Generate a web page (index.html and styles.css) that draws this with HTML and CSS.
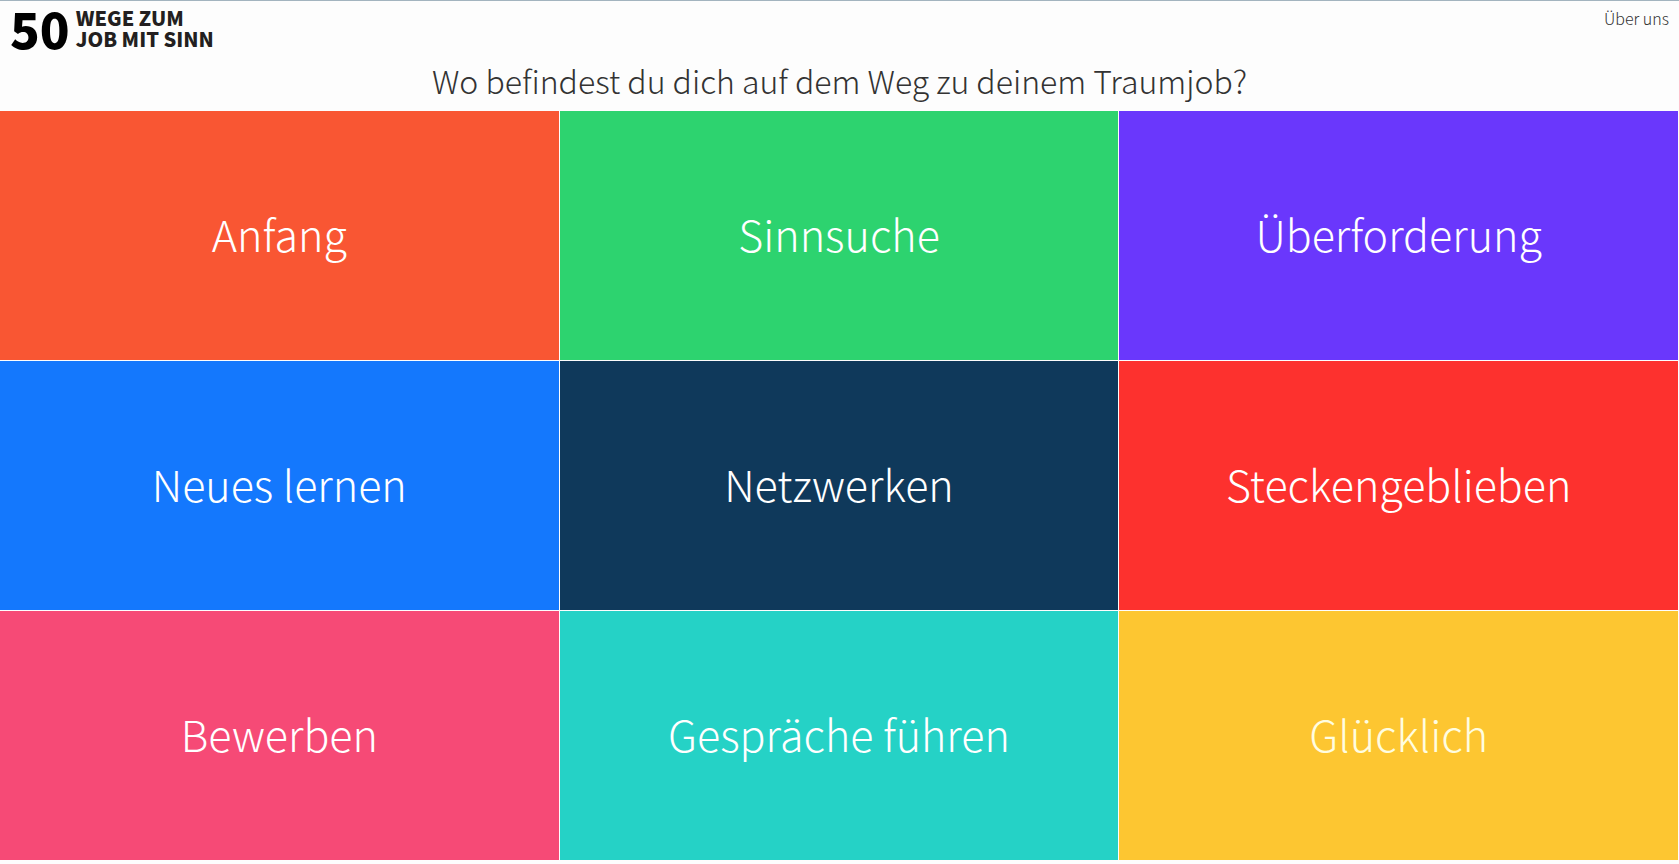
FILE: index.html
```html
<!DOCTYPE html>
<html lang="de">
<head>
    <meta charset="UTF-8">
    <meta name="viewport" content="width=device-width, initial-scale=1.0">
    <title>50 Wege zum Job mit Sinn</title>
    <link rel="stylesheet" href="styles.css">
</head>
<body>

    <header class="header">
        <a class="logo" href="#">
            <span class="logo-number">50</span>
            <span class="logo-text">WEGE ZUM<br>JOB MIT SINN</span>
        </a>
        <nav>
            <a class="nav-link" href="#">Über uns</a>
        </nav>
    </header>

    <h1 class="question">Wo befindest du dich auf dem Weg zu deinem Traumjob?</h1>

    <main class="tiles">
        <a class="tile start" href="#">Anfang</a>
        <a class="tile purpose" href="#">Sinnsuche</a>
        <a class="tile overload" href="#">Überforderung</a>
        <a class="tile learn" href="#">Neues lernen</a>
        <a class="tile network" href="#">Netzwerken</a>
        <a class="tile stuck" href="#">Steckengeblieben</a>
        <a class="tile apply" href="#">Bewerben</a>
        <a class="tile talk" href="#">Gespräche führen</a>
        <a class="tile happy" href="#">Glücklich</a>
    </main>

</body>
</html>
```

FILE: styles.css
```css
/* General Styles */
* {
    box-sizing: border-box;
}

body {
    display: flex;
    flex-direction: column;
    min-height: 100vh;
    margin: 0;
    padding-bottom: 3px;
    border-top: 1px solid #a3b4bf;
    background-color: #fdfdfd;
    color: #333;
    font-family: "Source Sans Pro", "Noto Sans CJK SC", sans-serif;
    font-weight: 300;
}

a {
    color: inherit;
    text-decoration: none;
}

/* Header Section */
.header {
    display: flex;
    justify-content: space-between;
    padding: 6px 10px 0;
}

.logo {
    display: flex;
    gap: 6px;
    color: #231f20;
    font-weight: 900;
}

.logo-number {
    color: #000;
    font-size: 49px;
    line-height: 42px;
}

.logo-text {
    font-size: 20px;
    line-height: 21px;
}

.nav-link {
    display: block;
    font-size: 16px;
    line-height: 22px;
}

/* Question */
.question {
    margin: 0;
    padding: 9px 10px;
    font-size: 32px;
    font-weight: 300;
    line-height: 44px;
    text-align: center;
}

/* Tiles */
.tiles {
    flex: 1;
    display: grid;
    grid-template-columns: repeat(3, 1fr);
    grid-auto-rows: 1fr;
}

.tile {
    display: flex;
    align-items: center;
    justify-content: center;
    padding-bottom: 6px;
    border: 0 solid #fdfdfd;
    border-width: 0 1px 1px 0;
    background-clip: padding-box;
    color: #fff;
    font-size: 43px;
    line-height: 64px;
}

.tile:hover {
    opacity: 0.9;
}

.start {
    background-color: #f95633;
}

.purpose {
    background-color: #2dd36f;
}

.overload {
    background-color: #6a37fc;
}

.learn {
    background-color: #1478fd;
}

.network {
    background-color: #0f395b;
}

.stuck {
    background-color: #fd312e;
}

.apply {
    background-color: #f64a76;
}

.talk {
    background-color: #25d2c6;
}

.happy {
    background-color: #fdc631;
    color: #fffde0;
}
```
